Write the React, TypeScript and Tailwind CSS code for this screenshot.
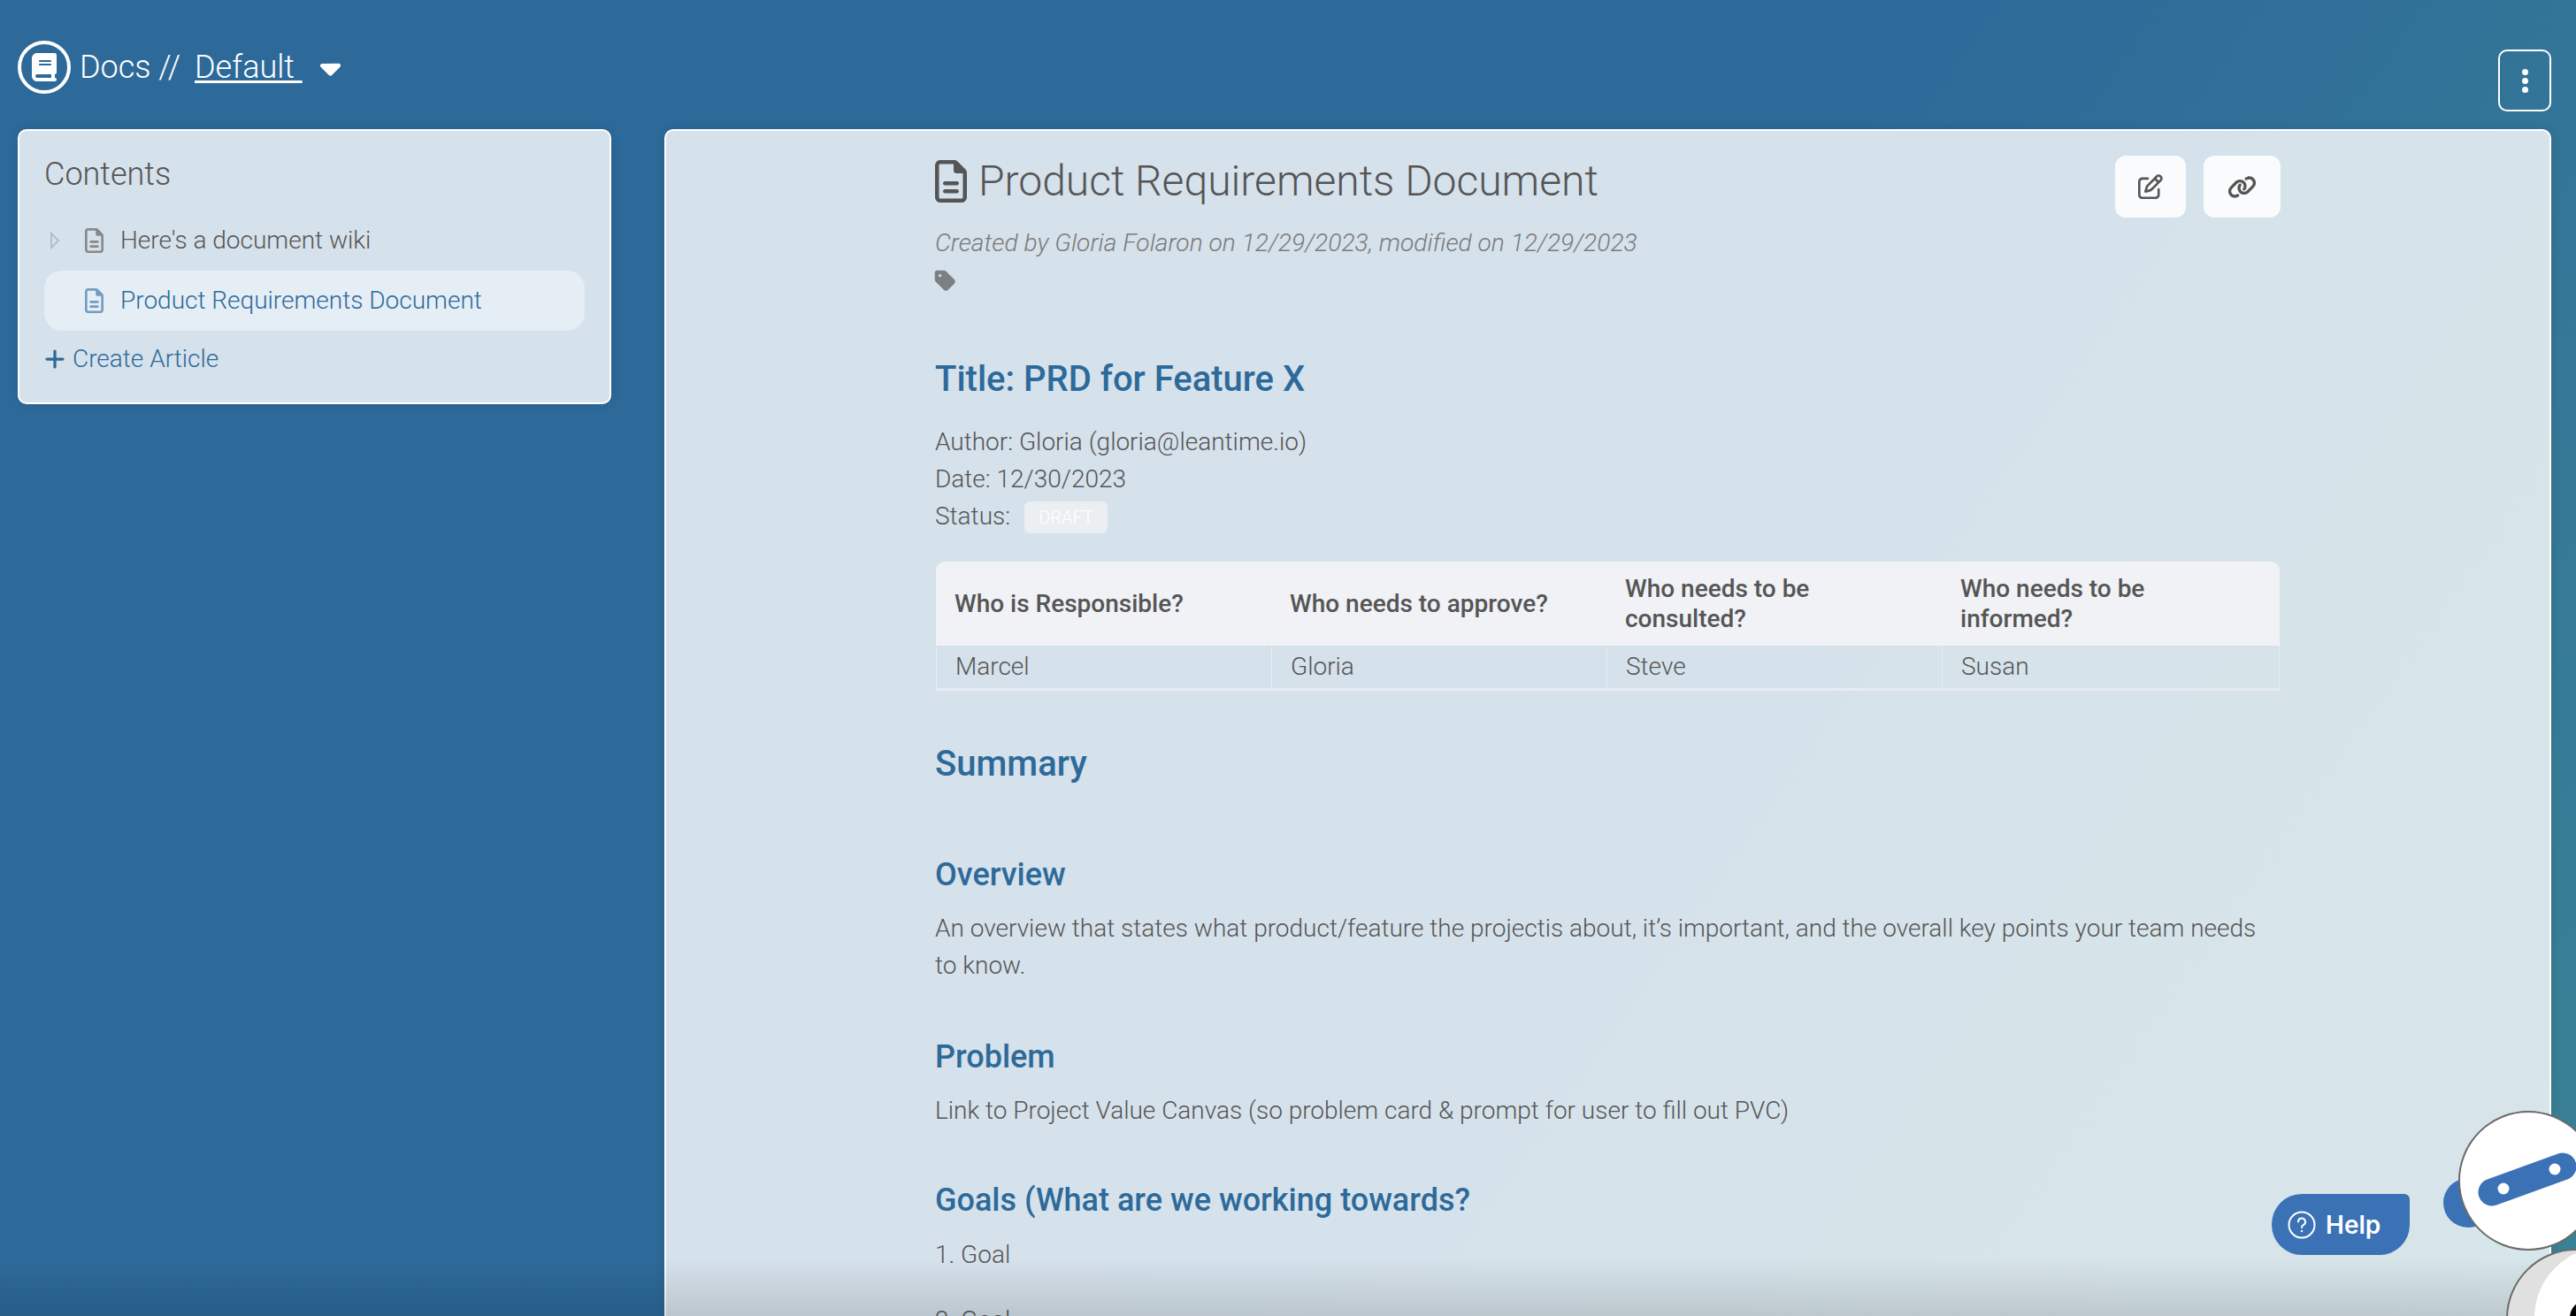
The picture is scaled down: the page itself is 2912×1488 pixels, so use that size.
import { FaBook, FaCaretDown, FaLink, FaPlus, FaRegFileLines, FaRegPenToSquare, FaTag } from "react-icons/fa6";

const headers = ["Who is Responsible?", "Who needs to approve?", "Who needs to be consulted?", "Who needs to be informed?"];
const people = ["Marcel", "Gloria", "Steve", "Susan"];

function Mascot() {
  // the two robot discs run off the corner of the window
  return (
    <svg className="absolute right-0 bottom-0" width="150" height="232" viewBox="2762 1256 150 232">
      <circle cx="2790" cy="1360" r="28" fill="#3b72b6" />
      <circle cx="2858" cy="1335" r="78" fill="#fff" stroke="#6b6b6b" strokeWidth="2" />
      <line x1="2817" y1="1348" x2="2897" y2="1319" stroke="#3b72b6" strokeWidth="31" strokeLinecap="round" />
      <circle cx="2830" cy="1344" r="6.5" fill="#fff" />
      <circle cx="2888" cy="1322" r="6.5" fill="#fff" />
      <clipPath id="disc"><circle cx="2912" cy="1491" r="78" /></clipPath>
      <circle cx="2912" cy="1491" r="78" fill="#e0e0e0" />
      <circle cx="2945" cy="1490" r="80" fill="#fff" clipPath="url(#disc)" />
      <circle cx="2925" cy="1490" r="20" fill="#000" />
      <circle cx="2912" cy="1491" r="78" fill="none" stroke="#6b6b6b" strokeWidth="2" />
    </svg>
  );
}

export default function App() {
  return (
    <div className="relative h-[1488px] w-[2912px] overflow-hidden bg-[linear-gradient(125deg,#2d6a9a_0%,#2d6a9a_55%,#3a8295_100%)] font-['Roboto',sans-serif] font-light text-[28px] leading-[42px] text-[#555555]">
      <div className="flex h-[146px] items-start pl-[20px] pr-[28px] pt-[46px]">
        <span className="flex h-[60px] w-[60px] items-center justify-center rounded-full border-[4px] border-white text-[32px] text-white">
          <FaBook />
        </span>
        <h1 className="ml-[10px] mt-[4px] flex items-center text-[36px] leading-[52px] text-white">
          Docs //
          <a className="ml-[16px] underline underline-offset-[3px] decoration-[3px] whitespace-pre">Default </a>
          <FaCaretDown className="ml-[13px] text-[37px]" />
        </h1>
        <button className="ml-auto mt-[10px] flex h-[70px] w-[60px] flex-col items-center justify-center gap-[3px] rounded-[10px] border-2 border-white">
          <span className="h-[7px] w-[7px] rounded-full bg-white" />
          <span className="h-[7px] w-[7px] rounded-full bg-white" />
          <span className="h-[7px] w-[7px] rounded-full bg-white" />
        </button>
      </div>

      <div className="flex items-start gap-[60px] pl-[20px] pr-[28px]">
        <aside className="h-[311px] w-[671px] shrink-0 rounded-[10px] border-2 border-white bg-white/80 px-[28px] pt-[24px] shadow-[0_0_12px_rgba(0,0,0,0.12)]">
          <h2 className="text-[36px] leading-[50px] text-[#555555]">Contents</h2>
          <div className="mt-[16px] flex h-[68px] items-center">
            <svg width="12" height="20" viewBox="0 0 12 20" className="ml-[6px]"><path d="M2 2l8 8-8 8z" fill="none" stroke="#b4bec7" strokeWidth="2" /></svg>
            <FaRegFileLines className="ml-[28px] h-[28px] w-[21px] text-[#888888]" />
            <span className="ml-[19px]">Here's a document wiki</span>
          </div>
          <div className="flex h-[68px] items-center rounded-[20px] bg-[#e5edf5] pl-[46px] text-[#2d6a9a]">
            <FaRegFileLines className="h-[28px] w-[21px] text-[#739cc0]" />
            <span className="ml-[19px]">Product Requirements Document</span>
          </div>
          <a className="mt-[11px] flex items-center text-[#2d6a9a]">
            <FaPlus className="-ml-[1px] text-[26px]" />
            <span className="ml-[7px]">Create Article</span>
          </a>
        </aside>

        <main className="h-[1342px] w-[2133px] shrink-0 rounded-t-[10px] border-2 border-b-0 border-white bg-white/80 pl-[304px] pr-[304px] pt-[28px] shadow-[0_0_12px_rgba(0,0,0,0.12)]">
          <div className="flex items-start justify-between">
            <h1 className="flex items-center text-[48px] leading-[58px] text-[#555555]">
              <FaRegFileLines className="h-[48px] w-[36px]" />
              <span className="ml-[13px]">Product Requirements Document</span>
            </h1>
            <div className="flex gap-[20px]">
              <button className="flex h-[70px] w-[80px] items-center justify-center rounded-[12px] bg-[#f9fbfc] text-[28px] text-[#555555]"><FaRegPenToSquare /></button>
              <button className="flex h-[70px] w-[87px] items-center justify-center rounded-[12px] bg-[#f9fbfc] text-[33px] text-[#555555]"><FaLink /></button>
            </div>
          </div>
          <p className="mt-[8px] text-[28.2px] italic text-[#7a7a7a]">Created by Gloria Folaron on 12/29/2023, modified on 12/29/2023</p>
          <FaTag className="-ml-[2px] mt-[8px] text-[27px] text-[#7c8084]" />

          <h2 className="mt-[68px] text-[40px] leading-[60px] font-medium text-[#2d6a9a]">Title: PRD for Feature X</h2>
          <p className="mt-[20px]">Author: Gloria (gloria@leantime.io)</p>
          <p>Date: 12/30/2023</p>
          <p className="flex items-center">
            Status:
            <span className="ml-[16px] mt-[2px] flex h-[36px] w-[94px] items-center justify-center rounded-[6px] bg-[#eceff2] text-[20px] text-white">DRAFT</span>
          </p>

          <table className="ml-[1px] mt-[30px] w-[1519px] table-fixed border-separate border-spacing-0">
            <thead>
              <tr className="h-[95px] align-middle">
                {headers.map((h) => (
                  <th key={h} className="bg-[#f0f2f6] pl-[21px] pr-[40px] text-left text-[28px] leading-[34px] font-medium not-last:w-[379px] first:rounded-tl-[10px] last:rounded-tr-[10px]">{h}</th>
                ))}
              </tr>
            </thead>
            <tbody>
              <tr className="h-[51px]">
                {people.map((p) => (
                  <td key={p} className="border-b-[3px] border-l border-[#e6ebf1] pl-[21px] last:border-r">{p}</td>
                ))}
              </tr>
            </tbody>
          </table>

          <h2 className="mt-[53px] text-[40px] leading-[60px] font-medium text-[#2d6a9a]">Summary</h2>
          <h3 className="mt-[70px] text-[36px] leading-[50px] font-medium text-[#2d6a9a]">Overview</h3>
          <p className="mt-[15px]">An overview that states what product/feature the projectis about, it’s important, and the overall key points your team needs to know.</p>
          <h3 className="mt-[57px] text-[36px] leading-[50px] font-medium text-[#2d6a9a]">Problem</h3>
          <p className="mt-[15px]">Link to Project Value Canvas (so problem card &amp; prompt for user to fill out PVC)</p>
          <h3 className="mt-[55px] text-[36px] leading-[50px] font-medium text-[#2d6a9a]">Goals (What are we working towards?</h3>
          <p className="mt-[16px]">1. Goal</p>
          <p className="mt-[32px]">2. Goal</p>
        </main>
      </div>

      <div className="pointer-events-none absolute inset-x-0 bottom-0 h-[66px] bg-gradient-to-b from-transparent to-[rgba(0,0,0,0.12)]" />

      <button className="absolute left-[2568px] top-[1350px] flex h-[69px] w-[156px] items-center rounded-[34px] rounded-tr-[6px] bg-[#3b72b6] pl-[18px] font-['Inter',sans-serif] text-[28px] font-semibold text-white">
        <svg width="32" height="32" viewBox="0 0 32 32" fill="none" stroke="#fff" strokeWidth="2">
          <circle cx="16" cy="16" r="14.5" />
          <path d="M12 12.5a4 4 0 1 1 6 3.4c-1.3.8-2 1.5-2 3" strokeLinecap="round" />
          <circle cx="16" cy="23" r="1.2" fill="#fff" stroke="none" />
        </svg>
        <span className="ml-[11px]">Help</span>
      </button>
      <Mascot />
    </div>
  );
}
